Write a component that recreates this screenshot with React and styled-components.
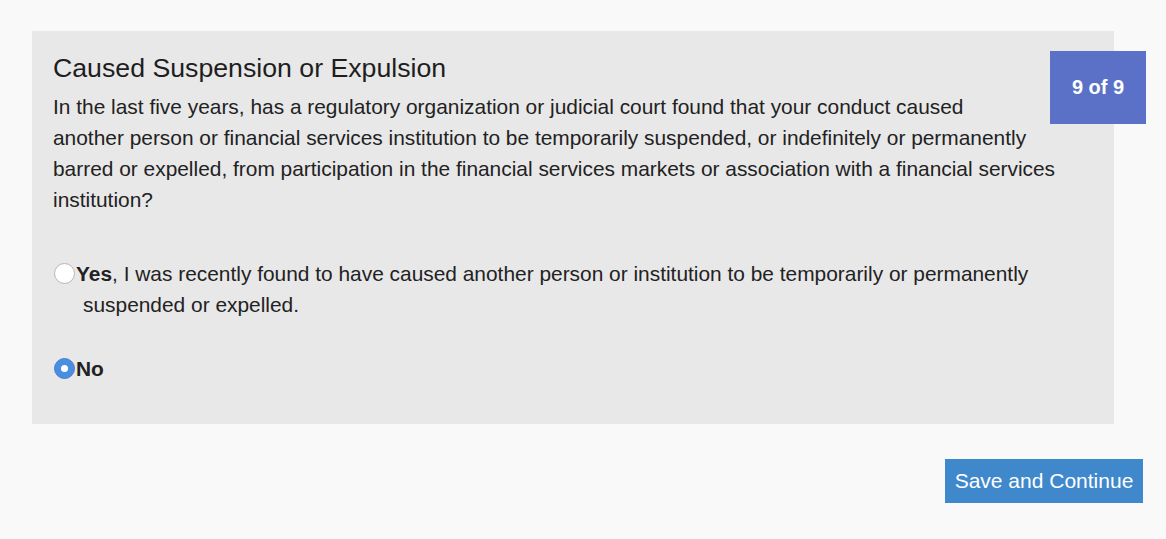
import styled, { createGlobalStyle } from "styled-components";

const GlobalStyle = createGlobalStyle`
  body {
    margin: 0;
    background: #f9f9f9;
    font-family: "Liberation Sans", Arial, sans-serif;
    color: #222;
  }
`;

const Page = styled.div`
  width: 1166px;
  height: 539px;
  padding: 31px 0 0 32px;
  box-sizing: border-box;
`;

const Panel = styled.div`
  position: relative;
  width: 1082px;
  height: 393px;
  box-sizing: border-box;
  background: #e8e8e8;
  padding: 20px 0 0 21px;
`;

const Badge = styled.div`
  position: absolute;
  top: 20px;
  right: -32px;
  width: 96px;
  height: 73px;
  background: #5b71c8;
  color: #fff;
  font-weight: bold;
  font-size: 20px;
  display: flex;
  align-items: center;
  justify-content: center;
`;

const Title = styled.h2`
  margin: 0 0 6px;
  font-size: 26.7px;
  font-weight: normal;
  line-height: 34px;
  color: #1e1e1e;
`;

const Question = styled.p`
  margin: 0;
  font-size: 20.9px;
  line-height: 31px;
  white-space: nowrap;
`;

const Options = styled.div`
  margin-top: 43px;
  display: flex;
  flex-direction: column;
  gap: 33px;
`;

const Option = styled.label`
  display: flex;
  align-items: flex-start;
  font-size: 20.9px;
  line-height: 31px;
`;

const Radio = styled.span`
  flex: none;
  width: 21px;
  height: 21px;
  margin: 5px 0 0 1px;
  border-radius: 50%;
  box-sizing: border-box;
  background: ${(p) => (p.checked ? "#4a8ee0" : "#fff")};
  border: 1px solid ${(p) => (p.checked ? "#3f82d6" : "#b5b5b5")};
  display: flex;
  align-items: center;
  justify-content: center;
  &::after {
    content: "";
    display: ${(p) => (p.checked ? "block" : "none")};
    width: 7px;
    height: 7px;
    border-radius: 50%;
    background: #fff;
  }
`;

const OptionText = styled.span`
  padding-left: ${(p) => p.indent || 1}px;
  text-indent: ${(p) => (p.indent ? 1 - p.indent : 0)}px;
  white-space: nowrap;
`;

const Footer = styled.div`
  display: flex;
  justify-content: flex-end;
  padding: 35px 23px 0 0;
`;

const Button = styled.button`
  background: #3f88cc;
  color: #fff;
  border: none;
  font-family: "Liberation Sans", Arial, sans-serif;
  font-size: 21px;
  width: 198px;
  height: 44px;
  padding: 0;
`;

export default function App() {
  return (
    <>
      <GlobalStyle />
      <Page>
        <Panel>
          <Badge>9 of 9</Badge>
          <Title>Caused Suspension or Expulsion</Title>
          <Question>
            In the last five years, has a regulatory organization or judicial court found that your conduct caused
            <br />
            another person or financial services institution to be temporarily suspended, or indefinitely or permanently
            <br />
            barred or expelled, from participation in the financial services markets or association with a financial services
            <br />
            institution?
          </Question>
          <Options>
            <Option>
              <Radio />
              <OptionText indent={8}>
                <b>Yes</b>, I was recently found to have caused another person or institution to be temporarily or permanently
                <br />
                suspended or expelled.
              </OptionText>
            </Option>
            <Option>
              <Radio checked />
              <OptionText>
                <b>No</b>
              </OptionText>
            </Option>
          </Options>
        </Panel>
        <Footer>
          <Button>Save and Continue</Button>
        </Footer>
      </Page>
    </>
  );
}
